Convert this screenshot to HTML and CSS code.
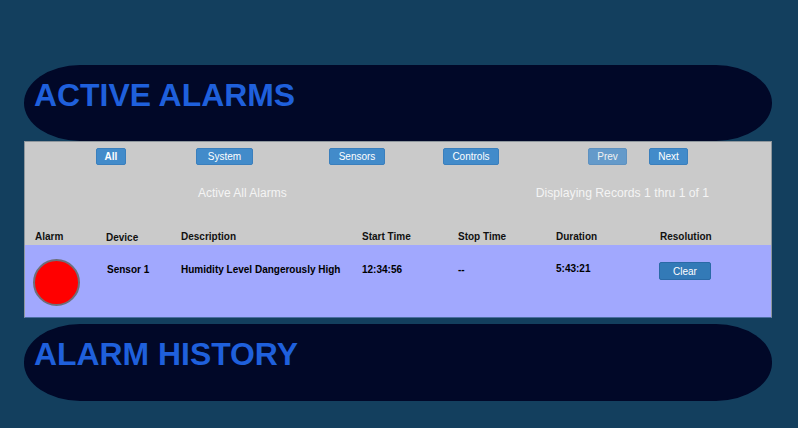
FILE: index.html
```html
<!DOCTYPE html>
<html>
<head>
<meta charset="utf-8">
<link rel="stylesheet" href="styles.css">
</head>
<body>
<div class="page">
  <div class="pill"><h1 class="pill-title">ACTIVE ALARMS</h1></div>
  <div class="panel">
    <div class="toolbar">
      <button class="btn btn-all">All</button>
      <button class="btn btn-system">System</button>
      <button class="btn btn-sensors">Sensors</button>
      <button class="btn btn-controls">Controls</button>
      <button class="btn btn-prev">Prev</button>
      <button class="btn btn-next">Next</button>
    </div>
    <div class="status">
      <span class="status-left">Active All Alarms</span>
      <span class="status-right">Displaying Records 1 thru 1 of 1</span>
    </div>
    <div class="grid head">
      <div>Alarm</div>
      <div class="dev-head">Device</div>
      <div>Description</div>
      <div>Start Time</div>
      <div>Stop Time</div>
      <div>Duration</div>
      <div>Resolution</div>
    </div>
    <div class="grid row">
      <div class="lamp-cell"><span class="lamp"></span></div>
      <div class="cell dev">Sensor 1</div>
      <div class="cell">Humidity Level Dangerously High</div>
      <div class="cell">12:34:56</div>
      <div class="cell">--</div>
      <div class="cell dur">5:43:21</div>
      <div class="clear-cell"><button class="btn-clear">Clear</button></div>
    </div>
  </div>
  <div class="pill pill-2"><h1 class="pill-title">ALARM HISTORY</h1></div>
</div>
</body>
</html>
```
FILE: styles.css
```css
* { box-sizing: border-box; }
html, body { margin: 0; padding: 0; }
body {
  background: #133f5e;
  font-family: "Liberation Sans", Arial, sans-serif;
  width: 798px;
  height: 428px;
  overflow: hidden;
}
.page {
  padding: 65px 26px 0 24px;
}
.pill {
  height: 76px;
  background: #010828;
  border-radius: 56px / 38px;
  padding: 14px 0 0 10px;
}
.pill-title {
  margin: 0;
  font-size: 31.9px;
  line-height: 32px;
  font-weight: bold;
  color: #1f60dc;
}
.pill-2 {
  margin-top: 6px;
  height: 77px;
}
.panel {
  background: #cacaca;
  border: 1px solid #8e969c;
  border-bottom-color: #4a6ea0;
  height: 177px;
}
.toolbar {
  display: flex;
  padding: 6px 0 0 71px;
  height: 24px;
}
.btn {
  height: 17px;
  padding: 0;
  background: #428bca;
  border: 1px solid #3a7fbd;
  border-radius: 2px;
  color: #fff;
  font-family: "Liberation Sans", Arial, sans-serif;
  font-size: 10px;
  line-height: 15px;
}
.btn-all { font-weight: bold; width: 30px; }
.btn-system { margin-left: 70px; width: 57px; }
.btn-sensors { margin-left: 76px; width: 56px; }
.btn-controls { margin-left: 58px; width: 56px; }
.btn-prev { margin-left: 89px; width: 39px; opacity: 0.75; }
.btn-next { margin-left: 22px; width: 39px; }
.status {
  display: flex;
  height: 52px;
  align-items: center;
  padding-top: 2px;
  color: #f4f4f4;
  font-size: 12px;
}
.status-left {
  margin-left: 173px;
}
.status-right {
  margin-left: 249px;
  font-size: 12.2px;
}
.grid {
  display: grid;
  grid-template-columns: 71px 75px 181px 96px 98px 104px 1fr;
  padding-left: 10px;
  font-size: 10px;
  font-weight: bold;
  color: #111;
}
.head {
  height: 27px;
  padding-top: 13px;
}
.dev-head { padding-top: 1px; }
.row {
  background: #a1a8fe;
  height: 72px;
  padding-top: 15px;
}
.lamp-cell { margin-left: -2px; margin-top: -1px; }
.cell { padding-top: 4px; color: #000; }
.dev { padding-left: 1px; }
.dur { padding-top: 3px; }
.lamp {
  display: block;
  width: 47px;
  height: 47px;
  border-radius: 50%;
  background: #ff0000;
  border: 2px solid #6e6e78;
}
.clear-cell { margin-left: -1px; padding-top: 2px; }
.btn-clear {
  width: 52px;
  height: 18px;
  background: #337ab7;
  border: 1px solid #2a6aa6;
  border-radius: 2px;
  color: #fff;
  font-family: "Liberation Sans", Arial, sans-serif;
  font-size: 10px;
  padding: 0;
}
```
